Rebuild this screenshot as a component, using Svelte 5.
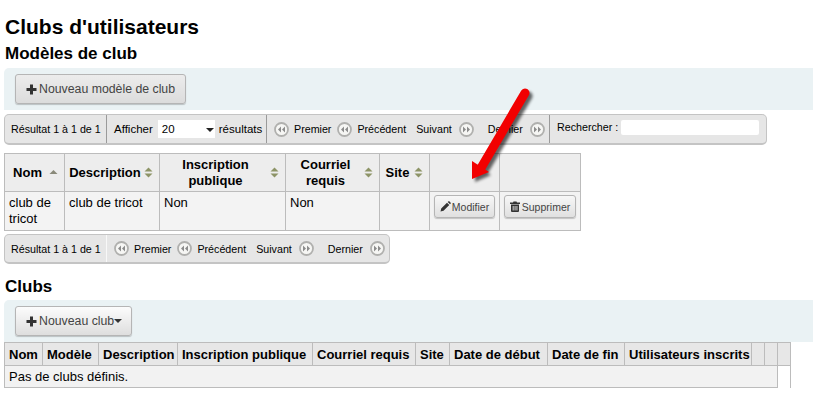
<script>
  const modelHeads = [
    { label: 'Nom', sort: 'asc' },
    { label: 'Description', sort: 'both' },
    { label: 'Inscription publique', sort: 'both' },
    { label: 'Courriel requis', sort: 'both' },
    { label: 'Site', sort: 'both' },
    { label: '' },
    { label: '' }
  ];
  const modelCols = [60, 95, 126, 94, 50, 70, 81];
  const clubHeads = ['Nom', 'Modèle', 'Description', 'Inscription publique', 'Courriel requis', 'Site', 'Date de début', 'Date de fin', 'Utilisateurs inscrits', '', '', ''];
  const clubCols = [38, 56, 79, 135, 103, 34, 98, 77, 127, 13, 13, 13];
</script>

{#snippet plus()}
  <svg class="ico" width="11" height="11" viewBox="0 0 11 11"><path d="M4 0.500h3v3.500h3.500v3H7v3.500H4V7H0.500V4H4z" fill="#333" /></svg>
{/snippet}

{#snippet nav(dir)}
  <svg class="nav" width="15" height="15" viewBox="0 0 15 15">
    <circle cx="7.500" cy="7.500" r="6.500" fill="#f6f6f4" stroke="#b0b0ae" stroke-width="1.800" />
    {#if dir === 'back'}
      <path d="M7 4.500v6L4 7.500zM11 4.500v6L8 7.500z" fill="#8c8c8c" />
    {:else}
      <path d="M4 4.500v6l3-3zM8 4.500v6l3-3z" fill="#8c8c8c" />
    {/if}
  </svg>
{/snippet}

{#snippet sorter(kind)}
  <svg class="sort" width="9" height="11" viewBox="0 0 9 11">
    {#if kind === 'asc'}
      <path d="M4.500 3l4 4h-8z" fill="#8a8a7a" />
    {:else}
      <path d="M4.500 0.500l4 4h-8z" fill="#8d9467" />
      <path d="M4.500 10.500l4-4h-8z" fill="#8d9467" />
    {/if}
  </svg>
{/snippet}

{#snippet bottomNav()}
  <div class="seg nav-seg">
    {@render nav('back')}<span class="lbl first">Premier</span>
    {@render nav('back')}<span class="lbl">Précédent</span>
    <span class="lbl next">Suivant</span>{@render nav('fwd')}
    <span class="lbl last">Dernier</span>{@render nav('fwd')}
  </div>
{/snippet}

<div class="page">
  <h1>Clubs d'utilisateurs</h1>
  <h2>Modèles de club</h2>

  <div class="toolbar">
    <button class="btn big">{@render plus()}Nouveau modèle de club</button>
  </div>

  <div class="pager top">
    <div class="seg info">Résultat 1 à 1 de 1</div>
    <div class="seg length">
      <span>Afficher</span>
      <span class="select">20<i class="caret"></i></span>
      <span>résultats</span>
    </div>
    {@render bottomNav()}
    <div class="seg search">
      <span>Rechercher :</span>
      <span class="input"></span>
    </div>
  </div>

  <table class="models">
    <colgroup>
      {#each modelCols as w}<col style="width:{w}px" />{/each}
    </colgroup>
    <thead>
      <tr>
        {#each modelHeads as h}
          <th>
            {#if h.label}
              <div class="th-in">
                <span class="th-text">{h.label}</span>
                {@render sorter(h.sort)}
              </div>
            {/if}
          </th>
        {/each}
      </tr>
    </thead>
    <tbody>
      <tr>
        <td>club de tricot</td>
        <td>club de tricot</td>
        <td>Non</td>
        <td>Non</td>
        <td></td>
        <td class="act">
          <button class="btn small">
            <svg class="ico tight" width="11" height="11" viewBox="0 0 11 11"><path d="M0.500 10.500l0.700-3 5.800-5.800 2.300 2.300-5.800 5.800zM7.700 1l0.800-0.700q0.400-0.300 0.800 0l1.400 1.400q0.300 0.400 0 0.800L10 3.300z" fill="#333" /></svg>Modifier
          </button>
        </td>
        <td class="act">
          <button class="btn small">
            <svg class="ico" width="10" height="11" viewBox="0 0 10 11"><path d="M3.500 0.500h3l0.500 1h3v1.500H0V1.500h3zM1 3.500h8V10q0 1-1 1H2q-1 0-1-1zM2.700 5v4.500h0.900V5zM4.600 5v4.500h0.900V5zM6.500 5v4.500h0.900V5z" fill="#333" fill-rule="evenodd" /></svg>Supprimer
          </button>
        </td>
      </tr>
    </tbody>
  </table>

  <div class="pager bottom">
    <div class="seg info">Résultat 1 à 1 de 1</div>
    {@render bottomNav()}
  </div>

  <h2 class="clubs-title">Clubs</h2>

  <div class="toolbar">
    <button class="btn big">{@render plus()}Nouveau club<i class="caret dark"></i></button>
  </div>

  <table class="clubs">
    <colgroup>
      {#each clubCols as w}<col style="width:{w}px" />{/each}
    </colgroup>
    <thead>
      <tr>
        {#each clubHeads as h}<th>{h}</th>{/each}
      </tr>
    </thead>
    <tbody>
      <tr>
        <td colspan="11">Pas de clubs définis.</td>
        <td class="stray"></td>
      </tr>
    </tbody>
  </table>

  <svg class="arrow" width="813" height="407" viewBox="0 0 813 407">
    <defs>
      <filter id="soft" x="-30%" y="-30%" width="160%" height="160%">
        <feGaussianBlur stdDeviation="1.500" />
      </filter>
    </defs>
    <g transform="translate(3 3)" fill="#000" stroke="#000" opacity="0.6" filter="url(#soft)">
      <path d="M525 93L481 168" stroke-width="9" stroke-linecap="round" />
      <path d="M472 179L472 162L488 172z" stroke="none" />
    </g>
    <path d="M525 93L481 168" stroke="#f20000" stroke-width="9" stroke-linecap="round" fill="none" />
    <path d="M472 179L472 161L489 172z" fill="#f20000" />
  </svg>
</div>

<style>
  :global(body) {
    margin: 0;
    background: #fff;
  }

  .page {
    position: relative;
    width: 813px;
    height: 407px;
    overflow: hidden;
    font-family: 'Liberation Sans', Arial, sans-serif;
    font-size: 13px;
    color: #000;
  }

  h1 {
    margin: 0;
    padding: 15px 0 0 5px;
    font-size: 21px;
    line-height: 23px;
    font-weight: bold;
  }

  h2 {
    margin: 0;
    padding: 6px 0 0 5px;
    font-size: 17px;
    line-height: 20px;
    font-weight: bold;
    height: 30px;
    box-sizing: border-box;
  }

  .toolbar {
    margin-left: 4px;
    height: 42px;
    box-sizing: border-box;
    padding: 6px 11px;
    background: #eaf2f4;
    border-radius: 5px 0 0 0;
  }

  .btn {
    display: inline-flex;
    align-items: center;
    box-sizing: border-box;
    margin: 0;
    border: 1px solid #b5b5b5;
    border-radius: 3px;
    font-family: inherit;
    color: #444;
    background: linear-gradient(#f7f7f7, #e0e0e0);
    box-shadow: 0 1px 1px rgba(0, 0, 0, 0.2);
  }

  .btn.big {
    height: 30px;
    padding: 0 10px;
    font-size: 12.300px;
    background: linear-gradient(#ececec, #dcdcdc);
  }

  .toolbar:last-of-type .btn.big {
    background: linear-gradient(#fcfcfc, #dedede);
  }

  .btn.small {
    height: 23px;
    padding: 0 5px;
    font-size: 10.500px;
  }

  .ico {
    margin-right: 2px;
    flex: none;
  }

  .ico.tight {
    margin-right: 1px;
  }

  .caret {
    display: inline-block;
    border-top: 4px solid #222;
    border-left: 4px solid transparent;
    border-right: 4px solid transparent;
  }

  .caret.dark {
    border-top-color: #333;
    margin-right: -1px;
  }

  .pager {
    display: flex;
    margin-left: 4px;
    box-sizing: border-box;
    background: #e6e6e6;
    border: 1px solid #c4c4c4;
    border-bottom-width: 2px;
    border-radius: 5px;
    font-size: 10.700px;
  }

  .pager.top {
    margin-top: 4px;
    width: 763px;
    height: 31px;
  }

  .pager.bottom {
    margin-top: 3px;
    width: 386px;
    height: 30px;
  }

  .seg {
    display: flex;
    align-items: center;
    box-sizing: border-box;
    height: 100%;
    border-right: 1px solid #9a9a9a;
  }

  .seg:last-child {
    border-right: 0;
  }

  .info {
    width: 102px;
    padding-left: 6px;
  }

  .bottom .info {
    border-right-color: #f8f8f8;
  }

  .length {
    width: 160px;
    padding-left: 7px;
    gap: 3px;
    font-size: 11.500px;
  }

  .select {
    position: relative;
    width: 57px;
    height: 18px;
    margin: 0 1px 0 2px;
    padding-left: 4px;
    box-sizing: border-box;
    background: #fff;
    line-height: 18px;
  }

  .select .caret {
    position: absolute;
    right: 1px;
    top: 8px;
  }

  .nav-seg {
    width: 283px;
    padding-left: 7px;
  }

  .bottom .nav-seg {
    width: 282px;
  }

  .nav {
    flex: none;
  }

  .lbl {
    margin: 0 7px 0 5px;
  }

  .lbl.first {
    margin-right: 6px;
  }

  .lbl.next {
    margin-left: 3px;
    margin-right: 7px;
  }

  .lbl.last {
    margin-left: 14px;
    margin-right: 7px;
  }

  .search {
    padding: 0 0 4px 7px;
    gap: 3px;
  }

  .input {
    width: 138px;
    height: 15px;
    background: #fff;
    border-radius: 2px;
  }

  table {
    margin-left: 4px;
    table-layout: fixed;
    border-collapse: collapse;
  }

  th,
  td {
    border: 1px solid #bcbcbc;
    box-sizing: border-box;
  }

  .models {
    margin-top: 8px;
    width: 576px;
  }

  .models th {
    height: 38px;
    padding: 0 6px 0 4px;
    background: #ededed;
    font-size: 13px;
    line-height: 16px;
  }

  .th-in {
    display: flex;
    align-items: center;
  }

  .th-text {
    flex: 1;
    text-align: center;
  }

  .sort {
    flex: none;
    margin-left: 3px;
  }

  .models td {
    height: 38px;
    padding: 3px 4px 3px 4px;
    vertical-align: top;
    background: #f3f3f3;
    line-height: 16px;
  }

  .models td.act {
    padding: 3px 3px;
    text-align: center;
  }

  .clubs-title {
    margin-top: 6px;
    padding-top: 7px;
    height: 30px;
  }

  .clubs {
    width: 786px;
  }

  .clubs th {
    height: 23px;
    padding: 0 4px;
    background: #e7e7e7;
    font-size: 13px;
    text-align: left;
    white-space: nowrap;
    overflow: hidden;
  }

  .clubs td {
    height: 22px;
    padding: 0 4px;
    background: #f2f2f2;
  }

  .clubs td.stray {
    background: #fff;
    border-bottom: 0;
  }

  .arrow {
    position: absolute;
    left: 0;
    top: 0;
    pointer-events: none;
  }
</style>
